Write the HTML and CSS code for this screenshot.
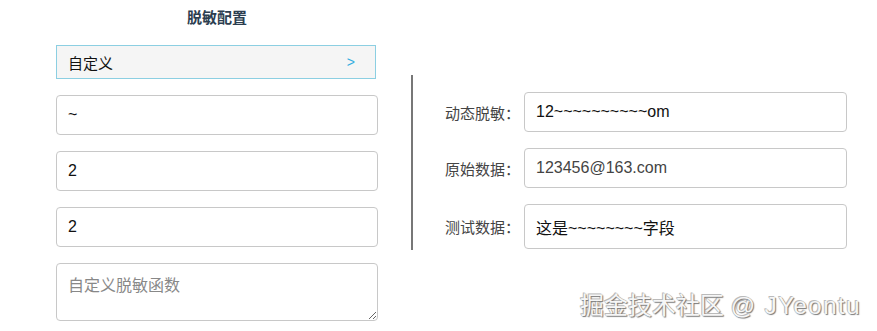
FILE: index.html
```html
<!DOCTYPE html>
<html lang="zh">
<head>
<meta charset="utf-8">
<title>脱敏配置</title>
<link rel="stylesheet" href="styles.css">
</head>
<body>
<div class="page">
  <div class="config">
    <div class="title">脱敏配置</div>
    <div class="select"><span>自定义</span><span class="arrow">&gt;</span></div>
    <input class="field" type="text" value="~">
    <input class="field" type="text" value="2">
    <input class="field" type="text" value="2">
    <textarea class="field area" placeholder="自定义脱敏函数"></textarea>
  </div>
  <div class="result">
    <div class="row"><label class="label">动态脱敏：</label><input class="rfield" type="text" value="12~~~~~~~~~~om"></div>
    <div class="row"><label class="label">原始数据：</label><input class="rfield muted" type="text" value="123456@163.com"></div>
    <div class="row"><label class="label">测试数据：</label><input class="rfield tall" type="text" value="这是~~~~~~~~字段"></div>
  </div>
</div>
<div class="watermark">掘金技术社区 <span class="latin">@ JYeontu</span></div>
</body>
</html>
```
FILE: styles.css
```css
* { box-sizing: border-box; }
html, body { margin: 0; padding: 0; background: #fff; }
body {
  font-family: "Liberation Sans", "Noto Sans CJK SC", sans-serif;
  color: #222;
  width: 877px;
  height: 331px;
  overflow: hidden;
  position: relative;
}
.page {
  display: flex;
  align-items: flex-start;
  padding-left: 56px;
}
.config {
  width: 322px;
  display: flex;
  flex-direction: column;
  gap: 16px;
}
.title {
  margin-top: 8px;
  height: 21px;
  line-height: 20px;
  text-align: center;
  font-size: 15px;
  font-weight: bold;
  color: #2c3e50;
}
.select {
  width: 320px;
  height: 34px;
  border: 1px solid #8ccfe2;
  background: #f5f5f5;
  display: flex;
  align-items: center;
  justify-content: space-between;
  padding: 0 20px 0 11px;
  font-size: 15px;
  color: #111;
}
.arrow { color: #35aee0; font-size: 14px; }
.field {
  width: 322px;
  height: 40px;
  border: 1px solid #c8c8c8;
  border-radius: 4px;
  padding: 0 11px;
  font-family: "Liberation Sans", "Noto Sans CJK SC", sans-serif;
  font-size: 16px;
  color: #111;
  background: #fff;
  outline: none;
  margin: 0;
  display: block;
}
.area {
  height: 58px;
  padding-top: 8px;
  resize: vertical;
}
.area::placeholder { color: #888; }
.result {
  margin-left: 33px;
  margin-top: 75px;
  border-left: 2px solid #777;
  height: 175px;
  padding: 17px 0 0 32px;
  display: flex;
  flex-direction: column;
  gap: 16px;
}
.row { display: flex; align-items: center; }
.label {
  width: 79px;
  font-size: 15px;
  color: #444;
}
.rfield {
  width: 323px;
  height: 40px;
  border: 1px solid #c8c8c8;
  border-radius: 4px;
  padding: 0 11px;
  font-family: "Liberation Sans", "Noto Sans CJK SC", sans-serif;
  font-size: 16px;
  color: #111;
  outline: none;
  margin: 0;
}
.rfield.muted { color: #444; }
.rfield.tall { height: 45px; }
.watermark {
  position: absolute;
  left: 580px;
  top: 286px;
  font-size: 24px;
  font-family: "Liberation Sans", "Noto Sans CJK SC", sans-serif;
  color: #f6f6f6;
  text-shadow: 1px 1px 1px #777, -1px -1px 0 #bbb, 0 0 1px #888;
  white-space: nowrap;
}
.latin { letter-spacing: 1.5px; }
```
